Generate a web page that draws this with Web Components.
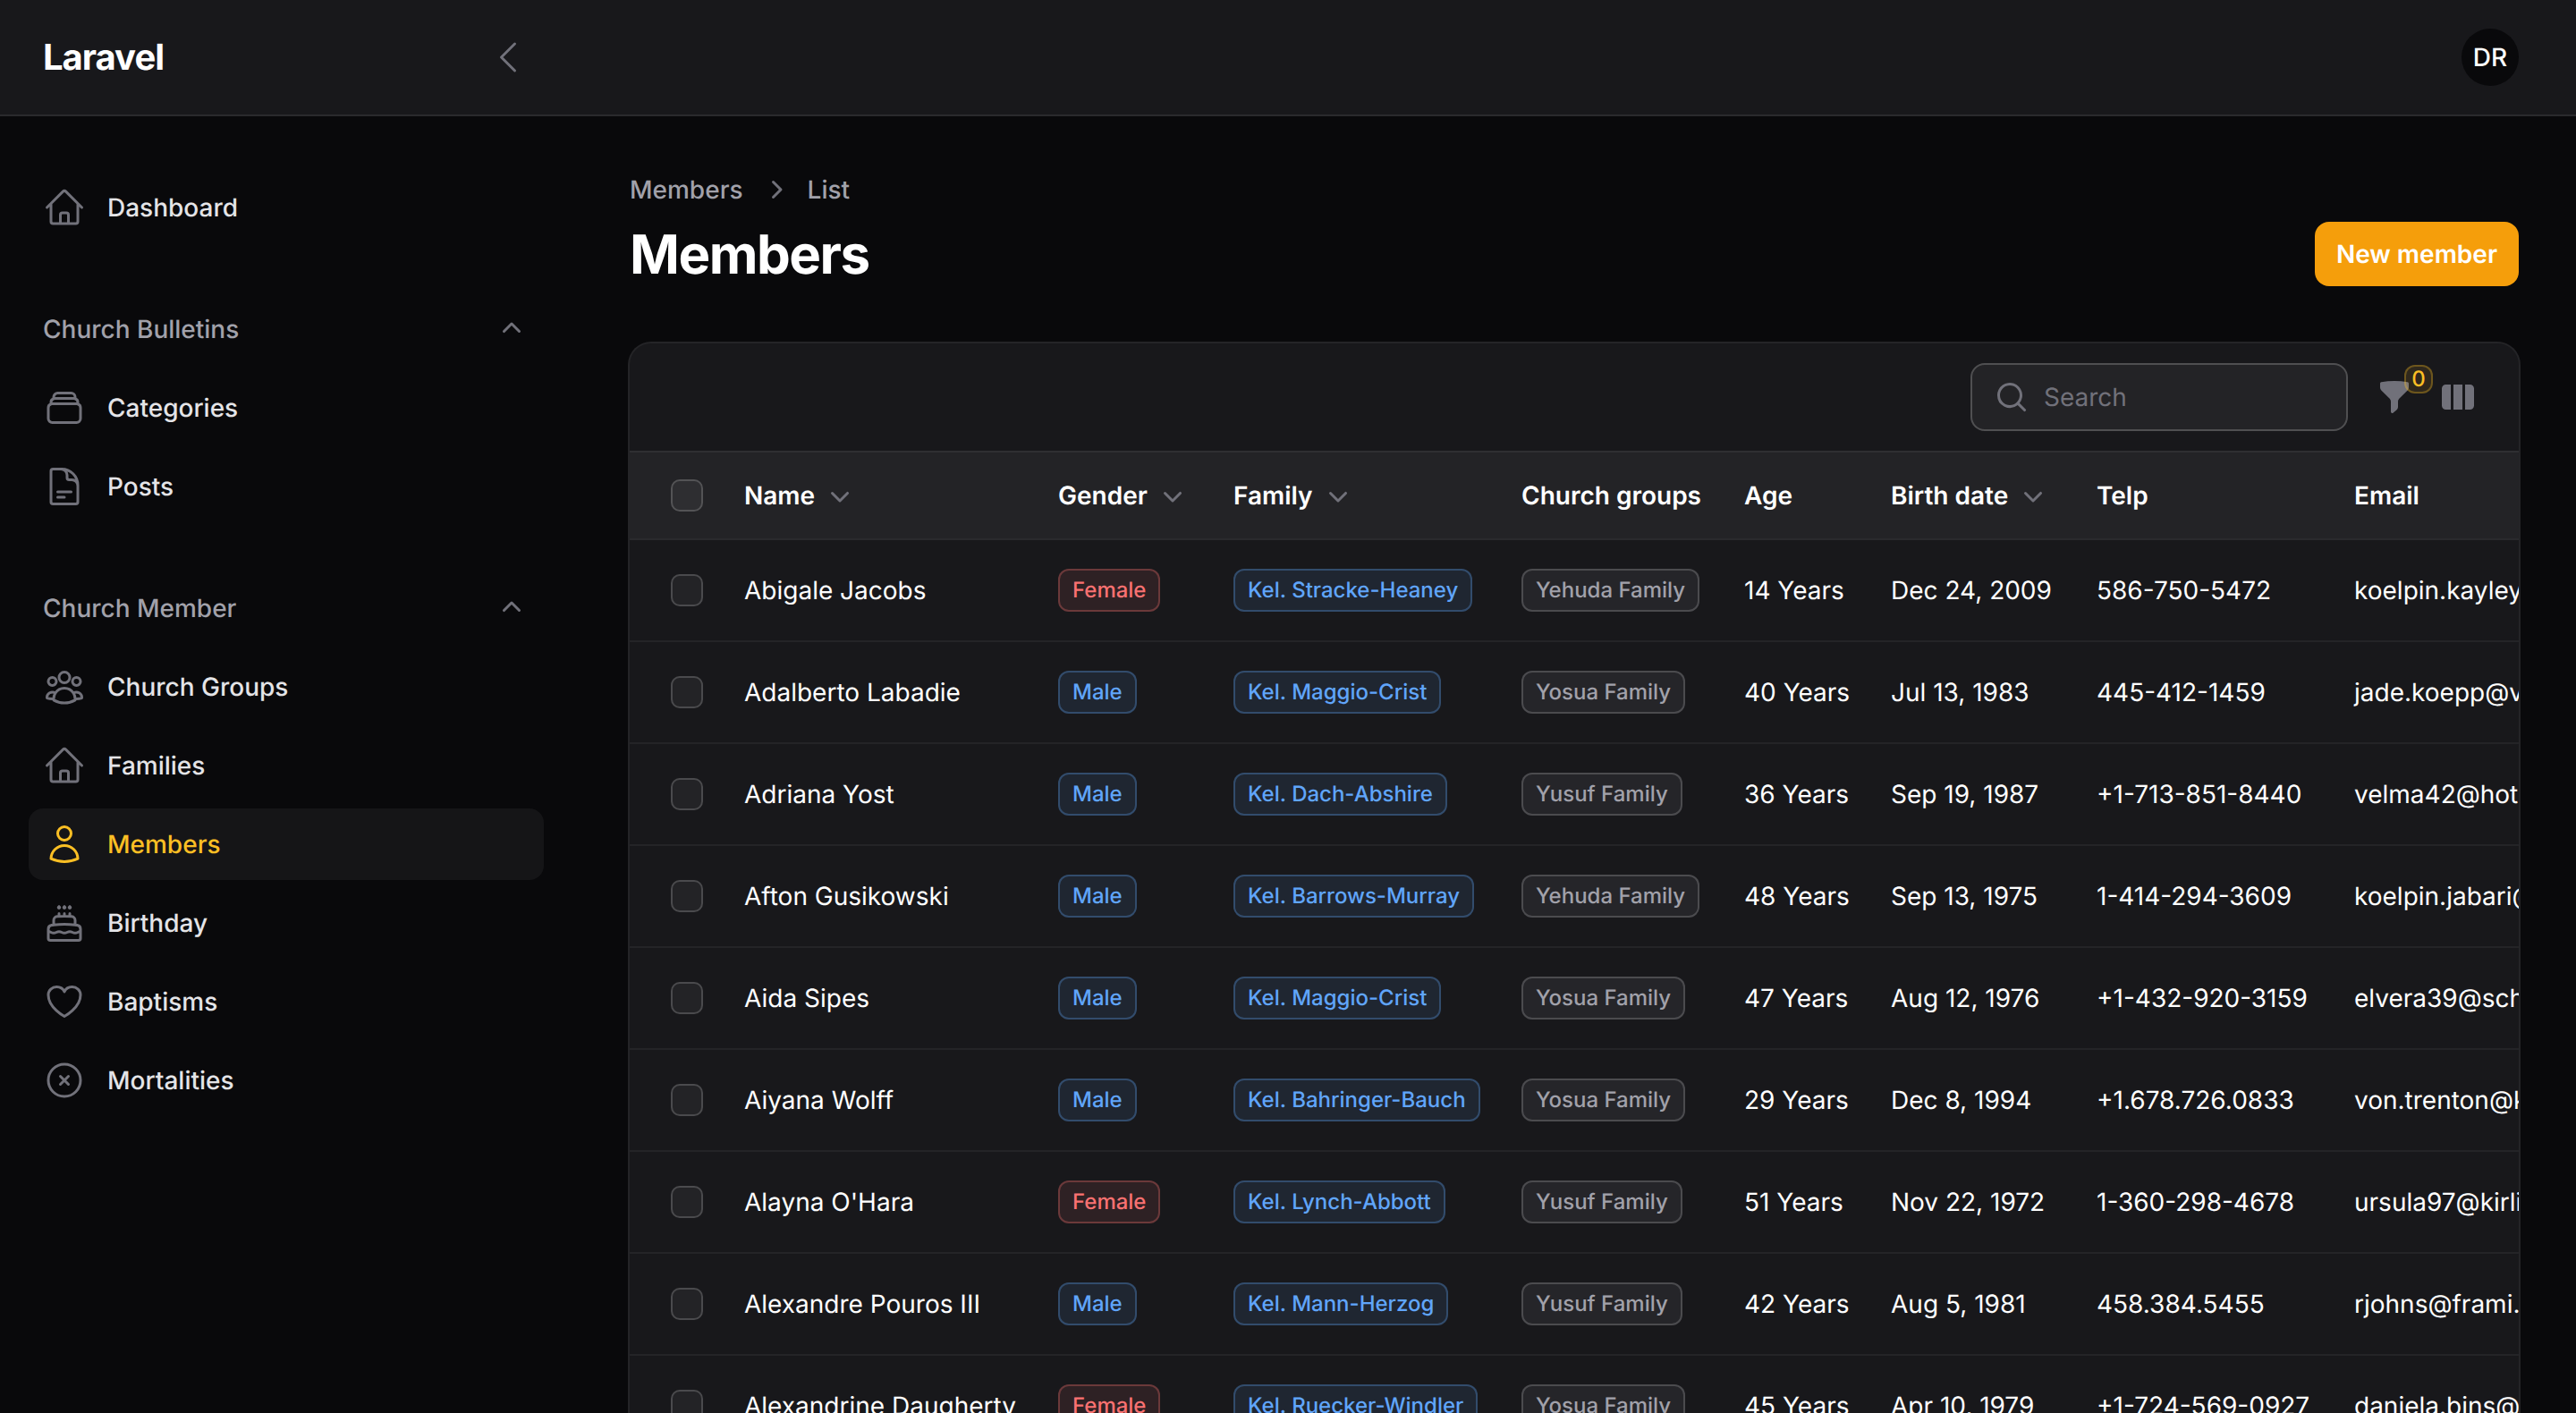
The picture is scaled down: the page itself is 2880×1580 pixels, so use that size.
<!DOCTYPE html>
<html lang="en">
<head>
<meta charset="utf-8">
<title>Members</title>
<style>
html,body{margin:0;padding:0;height:100%;background:#09090b;overflow:hidden}
body{font-family:Inter,"Noto Sans",sans-serif;color:#fff;font-size:28px;line-height:40px;text-rendering:geometricPrecision}
</style>
</head>
<body>
<app-shell></app-shell>
<script>
const OUT={
home:'m2.25 12 8.954-8.955c.44-.439 1.152-.439 1.591 0L21.75 12M4.5 9.75v10.125c0 .621.504 1.125 1.125 1.125H9.75v-4.875c0-.621.504-1.125 1.125-1.125h2.25c.621 0 1.125.504 1.125 1.125V21h4.125c.621 0 1.125-.504 1.125-1.125V9.75M8.25 21h8.25',
stack:'M6 6.878V6a2.25 2.25 0 0 1 2.25-2.25h7.5A2.25 2.25 0 0 1 18 6v.878m-12 0c.235-.083.487-.128.75-.128h10.5c.263 0 .515.045.75.128m-12 0A2.25 2.25 0 0 0 4.5 9v.878m13.5-3A2.25 2.25 0 0 1 19.5 9v.878m0 0a2.246 2.246 0 0 0-.75-.128H5.25c-.263 0-.515.045-.75.128m15 0A2.25 2.25 0 0 1 21 12v6a2.25 2.25 0 0 1-2.25 2.25H5.25A2.25 2.25 0 0 1 3 18v-6c0-.98.626-1.813 1.5-2.122',
doc:'M19.5 14.25v-2.625a3.375 3.375 0 0 0-3.375-3.375h-1.5A1.125 1.125 0 0 1 13.5 7.125v-1.5a3.375 3.375 0 0 0-3.375-3.375H8.25m0 12.75h7.5m-7.5 3H12M10.5 2.25H5.625c-.621 0-1.125.504-1.125 1.125v17.25c0 .621.504 1.125 1.125 1.125h12.75c.621 0 1.125-.504 1.125-1.125V11.25a9 9 0 0 0-9-9Z',
group:'M18 18.72a9.094 9.094 0 0 0 3.741-.479 3 3 0 0 0-4.682-2.72m.94 3.198.001.031c0 .225-.012.447-.037.666A11.944 11.944 0 0 1 12 21c-2.17 0-4.207-.576-5.963-1.584A6.062 6.062 0 0 1 6 18.719m12 0a5.971 5.971 0 0 0-.941-3.197m0 0A5.995 5.995 0 0 0 12 12.75a5.995 5.995 0 0 0-5.058 2.772m0 0a3 3 0 0 0-4.681 2.72 8.986 8.986 0 0 0 3.74.477m.94-3.197a5.971 5.971 0 0 0-.94 3.197M15 6.75a3 3 0 1 1-6 0 3 3 0 0 1 6 0Zm6 2.25a2.25 2.25 0 1 1-4.5 0 2.25 2.25 0 0 1 4.5 0Zm-13.5 0a2.25 2.25 0 1 1-4.5 0 2.25 2.25 0 0 1 4.5 0Z',
user:'M15.75 6a3.75 3.75 0 1 1-7.5 0 3.75 3.75 0 0 1 7.5 0ZM4.501 20.118a7.5 7.5 0 0 1 14.998 0A17.933 17.933 0 0 1 12 21.75c-2.676 0-5.216-.584-7.499-1.632Z',
cake:'M12 8.25v-1.5m0 1.5c-1.355 0-2.697.056-4.024.166C6.845 8.51 6 9.473 6 10.608v2.513m6-4.871c1.355 0 2.697.056 4.024.166C17.155 8.51 18 9.473 18 10.608v2.513M15 8.25v-1.5m-6 1.5v-1.5m12 9.75-1.5.75a3.354 3.354 0 0 1-3 0 3.354 3.354 0 0 0-3 0 3.354 3.354 0 0 1-3 0 3.354 3.354 0 0 0-3 0 3.354 3.354 0 0 1-3 0L3 16.5m15-3.379a48.474 48.474 0 0 0-6-.371c-2.032 0-4.034.126-6 .371m12 0c.39.049.777.102 1.163.16 1.07.16 1.837 1.094 1.837 2.175v5.169c0 .621-.504 1.125-1.125 1.125H4.125A1.125 1.125 0 0 1 3 20.625v-5.17c0-1.08.768-2.014 1.837-2.174A47.78 47.78 0 0 1 6 13.12M12.265 3.11a.375.375 0 1 1-.53 0L12 2.845l.265.265Zm-3 0a.375.375 0 1 1-.53 0L9 2.845l.265.265Zm6 0a.375.375 0 1 1-.53 0L15 2.845l.265.265Z',
heart:'M21 8.25c0-2.485-2.099-4.5-4.688-4.5-1.935 0-3.597 1.126-4.312 2.733-.715-1.607-2.377-2.733-4.313-2.733C5.1 3.75 3 5.765 3 8.25c0 7.22 9 12 9 12s9-4.78 9-12Z',
xcircle:'m9.75 9.75 4.5 4.5m0-4.5-4.5 4.5M21 12a9 9 0 1 1-18 0 9 9 0 0 1 18 0Z',
left:'M15.75 19.5 8.25 12l7.5-7.5'
};
const MINI={
down:'M5.22 8.22a.75.75 0 0 1 1.06 0L10 11.94l3.72-3.72a.75.75 0 1 1 1.06 1.06l-4.25 4.25a.75.75 0 0 1-1.06 0L5.22 9.28a.75.75 0 0 1 0-1.06Z',
up:'M14.78 11.78a.75.75 0 0 1-1.06 0L10 8.06l-3.72 3.72a.75.75 0 1 1-1.06-1.06l4.25-4.25a.75.75 0 0 1 1.06 0l4.25 4.25a.75.75 0 0 1 0 1.06Z',
right:'M8.22 5.22a.75.75 0 0 1 1.06 0l4.25 4.25a.75.75 0 0 1 0 1.06l-4.25 4.25a.75.75 0 0 1-1.06-1.06L11.94 10 8.22 6.28a.75.75 0 0 1 0-1.06Z',
search:'M9 3.5a5.5 5.5 0 1 0 0 11 5.5 5.5 0 0 0 0-11ZM2 9a7 7 0 1 1 12.452 4.391l3.328 3.329a.75.75 0 1 1-1.06 1.06l-3.329-3.328A7 7 0 0 1 2 9Z',
funnel:'M2.628 1.601C5.028 1.206 7.49 1 10 1s4.973.206 7.372.601a.75.75 0 0 1 .628.74v2.288a2.25 2.25 0 0 1-.659 1.59l-4.682 4.683a2.25 2.25 0 0 0-.659 1.59v3.037c0 .684-.31 1.33-.844 1.757l-1.937 1.55A.75.75 0 0 1 8 18.25v-5.757a2.25 2.25 0 0 0-.659-1.591L2.659 6.22A2.25 2.25 0 0 1 2 4.629V2.34a.75.75 0 0 1 .628-.74Z',
columns:'M14 17h2.75A2.25 2.25 0 0 0 19 14.75v-9.5A2.25 2.25 0 0 0 16.75 3H14v14ZM12.5 3h-5v14h5V3ZM3.25 3H6v14H3.25A2.25 2.25 0 0 1 1 14.75v-9.5A2.25 2.25 0 0 1 3.25 3Z'
};
class Base extends HTMLElement{
  render(html){ if(!this.shadowRoot) this.attachShadow({mode:'open'}); this.shadowRoot.innerHTML=html; }
}
class HeroIcon extends Base{
  connectedCallback(){
    const n=this.getAttribute('name'), s=this.getAttribute('size')||48;
    const svg=OUT[n]
      ?`<svg width="${s}" height="${s}" viewBox="0 0 24 24" fill="none" stroke="currentColor" stroke-width="1.5" stroke-linecap="round" stroke-linejoin="round"><path d="${OUT[n]}"/></svg>`
      :`<svg width="${s}" height="${s}" viewBox="0 0 20 20" fill="currentColor"><path fill-rule="evenodd" clip-rule="evenodd" d="${MINI[n]}"/></svg>`;
    this.render(`<style>:host{display:block;flex:none;line-height:0;color:inherit}svg{display:block}</style>${svg}`);
  }
}
class NavItem extends Base{
  connectedCallback(){
    const active=this.hasAttribute('active');
    this.render(`<style>
      :host{display:flex;align-items:center;gap:24px;height:80px;padding:0 16px;border-radius:16px;font-size:28px;font-weight:500;color:#e4e4e7}
      :host([active]){background:rgba(255,255,255,.05);color:#fbbf24}
      hero-icon{color:${active?'#fbbf24':'#71717a'}}
    </style><hero-icon name="${this.getAttribute('icon')}"></hero-icon><span><slot></slot></span>`);
  }
}
class NavGroup extends Base{
  connectedCallback(){
    this.render(`<style>
      :host{display:flex;flex-direction:column;gap:8px}
      .label{display:flex;align-items:center;justify-content:space-between;height:80px;padding:0 16px;font-size:28px;font-weight:500;color:#a1a1aa}
      hero-icon{color:#71717a}
    </style><div class="label"><span>${this.getAttribute('label')}</span><hero-icon name="up" size="40"></hero-icon></div><slot></slot>`);
  }
}
class SideNav extends Base{
  connectedCallback(){
    this.render(`<style>
      :host{display:flex;flex-direction:column;gap:56px;box-sizing:border-box;width:640px;flex:none;padding:62px 32px}
    </style>
    <nav-item icon="home">Dashboard</nav-item>
    <nav-group label="Church Bulletins">
      <nav-item icon="stack">Categories</nav-item>
      <nav-item icon="doc">Posts</nav-item>
    </nav-group>
    <nav-group label="Church Member">
      <nav-item icon="group">Church Groups</nav-item>
      <nav-item icon="home">Families</nav-item>
      <nav-item icon="user" active>Members</nav-item>
      <nav-item icon="cake">Birthday</nav-item>
      <nav-item icon="heart">Baptisms</nav-item>
      <nav-item icon="xcircle">Mortalities</nav-item>
    </nav-group>`);
  }
}
class TopBar extends Base{
  connectedCallback(){
    this.render(`<style>
      :host{display:flex;align-items:center;box-sizing:border-box;height:130px;padding:0 64px 0 48px;background:#18181b;border-bottom:2px solid #2a2a2d;flex:none}
      .logo{width:496px;font-size:40px;font-weight:700;letter-spacing:-1px;line-height:40px;color:#fff}
      .col{color:#71717a}
      .sp{flex:1}
      .av{width:64px;height:64px;border-radius:50%;background:#09090b;display:flex;align-items:center;justify-content:center;font-size:28px;font-weight:500;color:#fff}
    </style><div class="logo">Laravel</div><hero-icon class="col" name="left"></hero-icon><div class="sp"></div><div class="av">DR</div>`);
  }
}
class TagBadge extends Base{
  connectedCallback(){
    const c={red:'248,113,113',blue:'96,165,250',gray:'161,161,170'}[this.getAttribute('tone')];
    this.render(`<style>
      :host{display:inline-flex;align-items:center;box-sizing:border-box;height:48px;padding:0 14px;border:2px solid rgba(${c},.3);border-radius:12px;background:rgba(${c},.1);color:rgb(${c});font-size:24px;line-height:32px;font-weight:500;white-space:nowrap}
    </style><slot></slot>`);
  }
}
class UiCheck extends Base{
  connectedCallback(){
    this.render(`<style>
      :host{display:block;box-sizing:border-box;width:36px;height:36px;border-radius:10px;border:2px solid rgba(255,255,255,.18);background:rgba(255,255,255,.05)}
    </style>`);
  }
}
class UiButton extends Base{
  connectedCallback(){
    this.render(`<style>
      :host{display:inline-flex;align-items:center;justify-content:center;box-sizing:border-box;height:72px;padding:0 24px;border-radius:16px;background:#f59e0b;color:#fff;font-size:28px;font-weight:600;white-space:nowrap}
    </style><slot></slot>`);
  }
}
class PageHeader extends Base{
  connectedCallback(){
    this.render(`<style>
      :host{display:flex;align-items:flex-end;justify-content:space-between;flex:none}
      .crumbs{display:flex;align-items:center;gap:16px;height:40px;font-size:28px;font-weight:500;color:#a1a1aa;margin-bottom:16px}
      .crumbs hero-icon{color:#71717a}
      h1{margin:0;padding-top:2px;font-size:60px;line-height:70px;font-weight:700;letter-spacing:-1.5px;color:#fff}
    </style>
    <div><div class="crumbs"><span>Members</span><hero-icon name="right" size="40"></hero-icon><span>List</span></div><h1>Members</h1></div>
    <ui-button>New member</ui-button>`);
  }
}
class TableToolbar extends Base{
  connectedCallback(){
    this.render(`<style>
      :host{display:flex;align-items:center;justify-content:flex-end;box-sizing:border-box;height:120px;padding-right:48px;color:#71717a}
      .search{display:flex;align-items:center;box-sizing:border-box;width:422px;height:76px;border:2px solid rgba(255,255,255,.2);border-radius:16px;background:rgba(255,255,255,.05);padding-left:24px;gap:16px;font-size:28px;color:#71717a}
      .f{position:relative;margin-left:32px}
      .n{position:absolute;left:31px;top:-16px;box-sizing:border-box;width:32px;height:32px;display:flex;align-items:center;justify-content:center;border-radius:12px;border:2px solid rgba(251,191,36,.3);background:rgba(251,191,36,.1);color:#fbbf24;font-size:24px;line-height:24px;font-weight:500}
      .c{margin-left:31px}
    </style>
    <div class="search"><hero-icon name="search" size="40"></hero-icon><span>Search</span></div>
    <div class="f"><hero-icon name="funnel" size="40"></hero-icon><span class="n">0</span></div>
    <hero-icon class="c" name="columns" size="40"></hero-icon>`);
  }
}
const ROWS=[
['Abigale Jacobs','Female','Kel. Stracke-Heaney','Yehuda Family','14 Years','Dec 24, 2009','586-750-5472','koelpin.kayley@'],
['Adalberto Labadie','Male','Kel. Maggio-Crist','Yosua Family','40 Years','Jul 13, 1983','445-412-1459','jade.koepp@v'],
['Adriana Yost','Male','Kel. Dach-Abshire','Yusuf Family','36 Years','Sep 19, 1987','+1-713-851-8440','velma42@hotm'],
['Afton Gusikowski','Male','Kel. Barrows-Murray','Yehuda Family','48 Years','Sep 13, 1975','1-414-294-3609','koelpin.jabari@'],
['Aida Sipes','Male','Kel. Maggio-Crist','Yosua Family','47 Years','Aug 12, 1976','+1-432-920-3159','elvera39@scho'],
['Aiyana Wolff','Male','Kel. Bahringer-Bauch','Yosua Family','29 Years','Dec 8, 1994','+1.678.726.0833','von.trenton@k'],
["Alayna O'Hara",'Female','Kel. Lynch-Abbott','Yusuf Family','51 Years','Nov 22, 1972','1-360-298-4678','ursula97@kirlin'],
['Alexandre Pouros III','Male','Kel. Mann-Herzog','Yusuf Family','42 Years','Aug 5, 1981','458.384.5455','rjohns@frami.n'],
['Alexandrine Daugherty','Female','Kel. Ruecker-Windler','Yosua Family','45 Years','Apr 10, 1979','+1-724-569-0927','daniela.bins@']
];
class DataTable extends Base{
  connectedCallback(){
    const th=(t,s)=>`<div class="c"><span>${t}</span>${s?'<hero-icon name="down" size="40"></hero-icon>':''}</div>`;
    const rows=ROWS.map(r=>`<div class="r">
      <div class="c k"><ui-check></ui-check></div>
      <div class="c">${r[0]}</div>
      <div class="c"><tag-badge tone="${r[1]==='Female'?'red':'blue'}">${r[1]}</tag-badge></div>
      <div class="c"><tag-badge tone="blue">${r[2]}</tag-badge></div>
      <div class="c"><tag-badge tone="gray">${r[3]}</tag-badge></div>
      <div class="c">${r[4]}</div><div class="c">${r[5]}</div><div class="c">${r[6]}</div><div class="c e">${r[7]}</div>
    </div>`).join('');
    this.render(`<style>
      :host{display:block;font-size:28px;line-height:40px;color:#fff}
      .r{display:grid;grid-template-columns:104px 351px 196px 322px 249px 164px 230px 288px minmax(0,1fr);height:114px;box-sizing:border-box;border-top:2px solid #242427;align-items:center}
      .h{height:98px;background:#232326;font-weight:600;border-top-color:#2f2f32}
      .h + .r{border-top-color:#2a2a2d}
      .c{display:flex;align-items:center;gap:8px;padding:0 24px;white-space:nowrap;min-width:0}
      .k{padding-left:46px;padding-right:0}
      .e{padding-right:0;overflow:hidden}
      .h hero-icon{color:#71717a}
    </style>
    <div class="r h"><div class="c k"><ui-check></ui-check></div>${th('Name',1)}${th('Gender',1)}${th('Family',1)}${th('Church groups')}${th('Age')}${th('Birth date',1)}${th('Telp')}${th('Email')}</div>
    ${rows}`);
  }
}
class TableCard extends Base{
  connectedCallback(){
    this.render(`<style>
      :host{display:block;margin-top:64px;background:#18181b;border-radius:24px 24px 0 0;box-shadow:0 0 0 2px #242427;overflow:hidden;flex:none}
    </style><table-toolbar></table-toolbar><data-table></data-table>`);
  }
}
class AppShell extends Base{
  connectedCallback(){
    this.render(`<style>
      :host{display:flex;flex-direction:column;width:2880px;height:1580px;overflow:hidden}
      .b{display:flex;flex:1;min-height:0}
      main{flex:1;min-width:0;box-sizing:border-box;padding:62px 64px 0;display:flex;flex-direction:column;overflow:hidden}
    </style><top-bar></top-bar><div class="b"><side-nav></side-nav><main><page-header></page-header><table-card></table-card></main></div>`);
  }
}
[['hero-icon',HeroIcon],['nav-item',NavItem],['nav-group',NavGroup],['side-nav',SideNav],['top-bar',TopBar],['tag-badge',TagBadge],['ui-check',UiCheck],['ui-button',UiButton],['page-header',PageHeader],['table-toolbar',TableToolbar],['data-table',DataTable],['table-card',TableCard],['app-shell',AppShell]].forEach(([n,c])=>customElements.define(n,c));
</script>
</body>
</html>
